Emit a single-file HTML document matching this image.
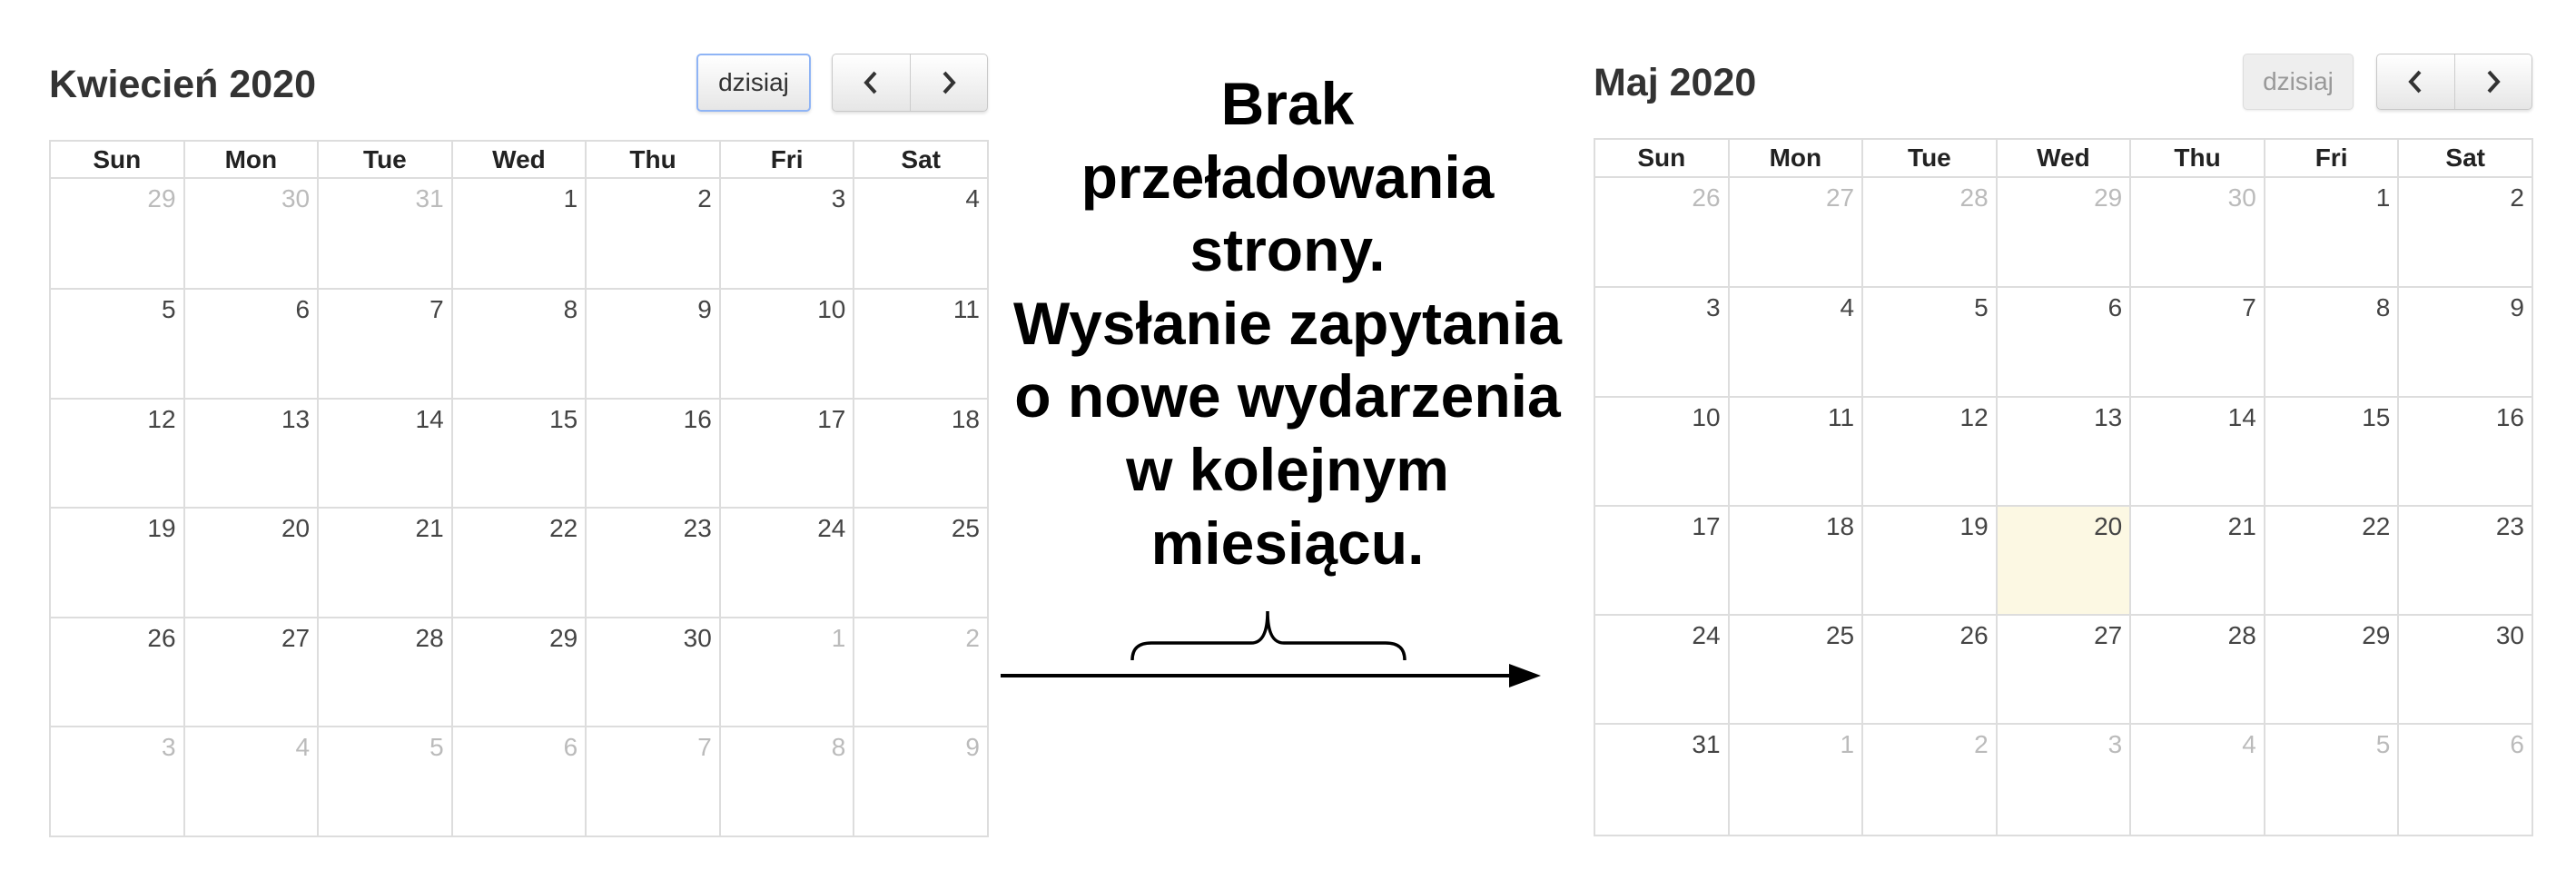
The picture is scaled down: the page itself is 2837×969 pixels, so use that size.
<!DOCTYPE html>
<html><head><meta charset="utf-8"><style>
html,body{margin:0;padding:0;background:#fff;width:2837px;height:969px;overflow:hidden;position:relative;font-family:"Liberation Sans",sans-serif;}
.title{position:absolute;font-weight:bold;font-size:43px;color:#333;line-height:1;}
.btn{position:absolute;box-sizing:border-box;border:1px solid #c8c8c8;border-radius:5px;background:linear-gradient(#fff,#e6e6e6);box-shadow:0 2px 3px rgba(0,0,0,.12);color:#333;font-size:28px;display:flex;align-items:center;justify-content:center;}
.grp{position:absolute;box-sizing:border-box;border:1px solid #c8c8c8;border-radius:5px;background:linear-gradient(#fff,#e6e6e6);box-shadow:0 2px 3px rgba(0,0,0,.12);display:flex;}
.grp div{flex:1;display:flex;align-items:center;justify-content:center;}
.grp div+div{border-left:1px solid #ccc;}
table{position:absolute;border-collapse:collapse;table-layout:fixed;width:1035px;}
td,th{border:2px solid #ddd;padding:0;}
th{font-size:28px;color:#222;font-weight:bold;text-align:center;vertical-align:middle;}
td{vertical-align:top;text-align:right;font-size:28px;color:#444;padding:6px 8px 0 0;box-sizing:border-box;}
td.o{color:#bbb;}
td.t{background:#fcf8e3;}
.txt{position:absolute;left:1068px;width:700px;top:74px;text-align:center;font-weight:bold;font-size:66px;line-height:80.6px;color:#000;}
</style></head><body>

<div class="title" style="left:54px;top:72px;">Kwiecień 2020</div>
<div class="btn" style="left:767px;top:59px;width:126px;height:64px;border:2px solid #8fb4f5;">dzisiaj</div>
<div class="grp" style="left:916px;top:59px;width:172px;height:64px;">
<div><svg width="20" height="28" viewBox="0 0 20 28"><path d="M15 3 L5 14 L15 25" fill="none" stroke="#333" stroke-width="4"/></svg></div>
<div><svg width="20" height="28" viewBox="0 0 20 28"><path d="M5 3 L15 14 L5 25" fill="none" stroke="#333" stroke-width="4"/></svg></div>
</div>

<table style="left:54px;top:154px;">
<tr style="height:41px"><th>Sun</th><th>Mon</th><th>Tue</th><th>Wed</th><th>Thu</th><th>Fri</th><th>Sat</th></tr>
<tr style="height:122px"><td class="o">29</td><td class="o">30</td><td class="o">31</td><td>1</td><td>2</td><td>3</td><td>4</td></tr>
<tr style="height:121px"><td>5</td><td>6</td><td>7</td><td>8</td><td>9</td><td>10</td><td>11</td></tr>
<tr style="height:120px"><td>12</td><td>13</td><td>14</td><td>15</td><td>16</td><td>17</td><td>18</td></tr>
<tr style="height:121px"><td>19</td><td>20</td><td>21</td><td>22</td><td>23</td><td>24</td><td>25</td></tr>
<tr style="height:120px"><td>26</td><td>27</td><td>28</td><td>29</td><td>30</td><td class="o">1</td><td class="o">2</td></tr>
<tr style="height:121px"><td class="o">3</td><td class="o">4</td><td class="o">5</td><td class="o">6</td><td class="o">7</td><td class="o">8</td><td class="o">9</td></tr>
</table>

<div class="txt">Brak<br>przeładowania<br>strony.<br>Wysłanie zapytania<br>o nowe wydarzenia<br>w kolejnym<br>miesiącu.</div>

<svg style="position:absolute;left:0;top:0" width="2837" height="969">
<path d="M1247 727 C1247 714 1254 708 1268 708 L1378 708 C1390 708 1396 697 1396 673 C1396 697 1402 708 1414 708 L1526 708 C1540 708 1547 714 1547 727" fill="none" stroke="#000" stroke-width="3.5"/>
<line x1="1102" y1="744" x2="1665" y2="744" stroke="#000" stroke-width="4"/>
<path d="M1662 731 L1697 744 L1662 757 Z" fill="#000"/>
</svg>

<div class="title" style="left:1755px;top:70px;">Maj 2020</div>
<div class="btn" style="left:2470px;top:59px;width:122px;height:62px;color:#999;background:#eee;box-shadow:0 1px 2px rgba(0,0,0,.08);border-color:#ddd;">dzisiaj</div>
<div class="grp" style="left:2617px;top:59px;width:172px;height:62px;">
<div><svg width="20" height="28" viewBox="0 0 20 28"><path d="M15 3 L5 14 L15 25" fill="none" stroke="#333" stroke-width="4"/></svg></div>
<div><svg width="20" height="28" viewBox="0 0 20 28"><path d="M5 3 L15 14 L5 25" fill="none" stroke="#333" stroke-width="4"/></svg></div>
</div>

<table style="left:1755px;top:152px;">
<tr style="height:42px"><th>Sun</th><th>Mon</th><th>Tue</th><th>Wed</th><th>Thu</th><th>Fri</th><th>Sat</th></tr>
<tr style="height:121px"><td class="o">26</td><td class="o">27</td><td class="o">28</td><td class="o">29</td><td class="o">30</td><td>1</td><td>2</td></tr>
<tr style="height:121px"><td>3</td><td>4</td><td>5</td><td>6</td><td>7</td><td>8</td><td>9</td></tr>
<tr style="height:120px"><td>10</td><td>11</td><td>12</td><td>13</td><td>14</td><td>15</td><td>16</td></tr>
<tr style="height:120px"><td>17</td><td>18</td><td>19</td><td class="t">20</td><td>21</td><td>22</td><td>23</td></tr>
<tr style="height:120px"><td>24</td><td>25</td><td>26</td><td>27</td><td>28</td><td>29</td><td>30</td></tr>
<tr style="height:123px"><td>31</td><td class="o">1</td><td class="o">2</td><td class="o">3</td><td class="o">4</td><td class="o">5</td><td class="o">6</td></tr>
</table>

</body></html>
